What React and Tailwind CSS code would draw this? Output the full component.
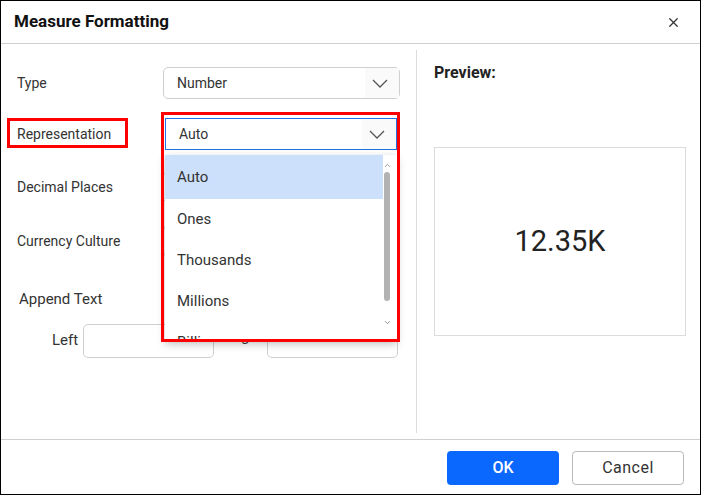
import { X, ChevronDown, ChevronUp } from "lucide-react";

function Chevron() {
  return (
    <svg width="16" height="9" viewBox="0 0 16 9" fill="none" className="text-[#555]">
      <polyline points="1,1 8,8 15,1" stroke="currentColor" strokeWidth="1.3" />
    </svg>
  );
}

function Select({ value, focused, width = "w-[237px]" }) {
  return (
    <div
      className={`flex h-[32px] ${width} items-center justify-between border bg-white pl-[13px] text-[14px] text-[#333] ${
        focused ? "border-[#1f6fe5]" : "rounded-[5px] border-[#cfcfcf]"
      }`}
    >
      <span>{value}</span>
      <div className="flex h-full w-[34px] items-center justify-center bg-[#fafafa] pr-[4px]">
        <Chevron />
      </div>
    </div>
  );
}

const options = ["Auto", "Ones", "Thousands", "Millions", "Billions"];

export default function App() {
  return (
    <div
      className="flex h-[495px] w-[701px] flex-col border border-black bg-white text-[#333]"
      style={{ fontFamily: "Roboto, 'Liberation Sans', sans-serif" }}
    >
      {/* header */}
      <div className="flex h-[43px] shrink-0 items-center justify-between border-b border-[#cfcfcf] pl-[13px] pr-[19px]">
        <h1 className="text-[17px] font-bold text-[#111]">Measure Formatting</h1>
        <X size={15} strokeWidth={2} className="text-[#333]" />
      </div>

      {/* body */}
      <div className="flex flex-1">
        <div className="relative w-[415px] pl-[16px] pt-[23px]">
          <div className="flex items-center">
            <span className="w-[146px] text-[14px]">Type</span>
            <Select value="Number" />
          </div>

          <div className="relative z-10 mt-[19px] flex items-center">
            <span className="relative w-[148px] text-[14px]">
              Representation
              <span className="absolute left-[-10px] top-[-6px] h-[30px] w-[121px] border-[3px] border-[#ff0000]" />
            </span>
            <div className="relative">
              <Select value="Auto" focused width="w-[232px]" />
              {/* dropdown popup */}
              <div className="absolute left-0 top-[37px] z-10 h-[186px] w-[232px] overflow-hidden bg-white shadow-[0_3px_8px_rgba(0,0,0,0.25)]">
                <div className="flex flex-col pr-[14px]">
                  {options.map((o, i) => (
                    <div
                      key={o}
                      className={`flex shrink-0 items-center pl-[12px] text-[15px] ${
                        i === 0 ? "h-[44px] bg-[#cde0fb]" : "h-[41px]"
                      }`}
                    >
                      {o}
                    </div>
                  ))}
                </div>
                <div className="absolute right-[5px] top-0 flex h-full w-[10px] flex-col items-center pt-[6px]">
                  <ChevronUp size={9} strokeWidth={2} className="text-[#777]" />
                  <div className="mt-[2px] h-[129px] w-[6px] rounded-full bg-[#b3b3b3]" />
                  <ChevronDown size={9} strokeWidth={2} className="mt-[17px] text-[#777]" />
                </div>
              </div>
              <span className="absolute left-[-4px] top-[-6px] z-20 h-[230px] w-[239px] border-[3px] border-[#ff0000]" />
            </div>
          </div>

          <div className="mt-[21px] flex items-center">
            <span className="w-[146px] text-[14px]">Decimal Places</span>
            <Select value="" />
          </div>

          <div className="mt-[22px] flex items-center">
            <span className="w-[146px] text-[14px]">Currency Culture</span>
            <Select value="" />
          </div>

          <div className="ml-[2px] mt-[31px] text-[15px]">Append Text</div>

          <div className="mt-[13px] flex items-center">
            <span className="ml-[35px] w-[31px] text-[15px]">Left</span>
            <div className="h-[34px] w-[131px] rounded-[5px] border border-[#cfcfcf]" />
            <span className="mb-[8px] ml-[14px] w-[39px] text-[15px]">Right</span>
            <div className="h-[34px] w-[131px] rounded-[5px] border border-[#cfcfcf]" />
          </div>
        </div>

        <div className="my-[6px] w-px bg-[#dcdcdc]" />

        <div className="flex-1 pl-[17px] pr-[14px] pt-[17px]">
          <h2 className="text-[16px] font-bold text-[#222]">Preview:</h2>
          <div className="mt-[62px] flex h-[189px] items-center justify-center border border-[#dcdcdc]">
            <span className="text-[29px] text-[#222]">12.35K</span>
          </div>
        </div>
      </div>

      {/* footer */}
      <div className="flex h-[55px] shrink-0 items-center justify-end gap-[13px] border-t border-[#cfcfcf] pr-[16px] pt-[2px]">
        <button className="h-[34px] w-[112px] rounded-[4px] bg-[#0a68ff] text-[16px] font-medium text-white">
          OK
        </button>
        <button className="h-[34px] w-[112px] rounded-[4px] border border-[#b9b9b9] bg-white text-[16px] tracking-[0.5px] text-[#333]">
          Cancel
        </button>
      </div>
    </div>
  );
}
